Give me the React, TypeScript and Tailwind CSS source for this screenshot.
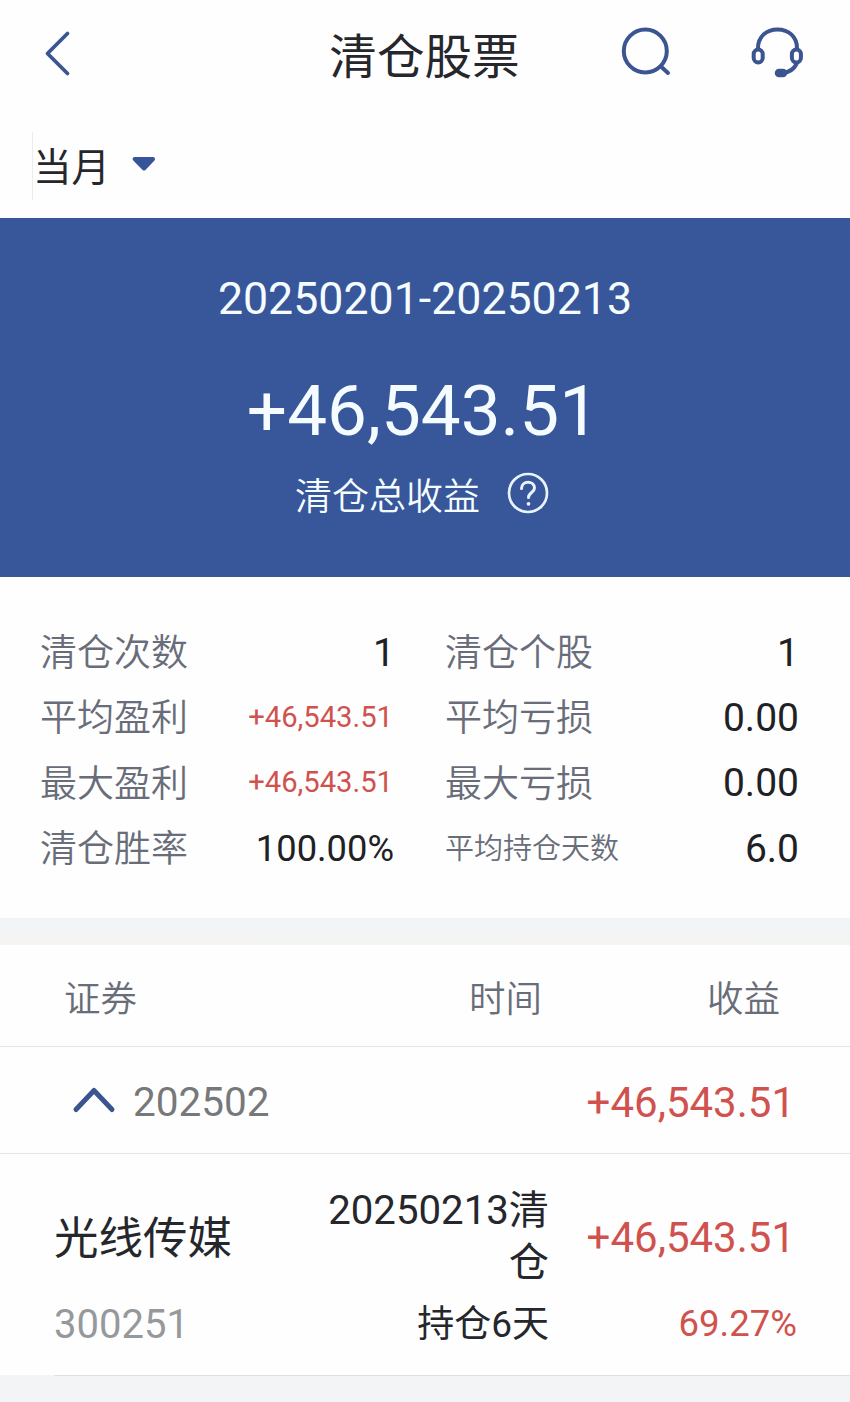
const stats = [
  { label: "清仓次数", value: "1", label2: "清仓个股", value2: "1" },
  { label: "平均盈利", value: "+46,543.51", label2: "平均亏损", value2: "0.00" },
  { label: "最大盈利", value: "+46,543.51", label2: "最大亏损", value2: "0.00" },
  { label: "清仓胜率", value: "100.00%", label2: "平均持仓天数", value2: "6.0" },
]

function valueClass(value: string) {
  if (value.startsWith("+")) return "pr-0.5 pt-px text-[29.200px] text-[#d0524e]"
  if (value.endsWith("%")) return "pr-px pt-[3px] text-[36.300px] text-[#1f2125]"
  return "pt-[3px] text-[39px] text-[#1f2125]"
}

function Header() {
  return (
    <header className="flex h-[110px] items-center justify-between pl-[42px] pr-[46px]">
      <div className="flex w-[187px] pb-1">
        <svg width="30" height="48" viewBox="0 0 30 48" fill="none" stroke="#3b5590" strokeWidth="3.800" strokeLinecap="round" strokeLinejoin="round">
          <path d="M25.500 4.500 L5.500 24.500 L25.500 44.500" />
        </svg>
      </div>
      <h1 className="pt-1.5 text-[47.600px] leading-[56px] text-[#25272c]">清仓股票</h1>
      <div className="flex w-[184px] items-center justify-between pb-1">
        <svg width="52" height="52" viewBox="0 0 52 52" fill="none" stroke="#3b5590" strokeWidth="4" strokeLinecap="round">
          <circle cx="25.300" cy="24" r="21.500" />
          <path d="M41.500 40 L48 46" />
        </svg>
        <svg width="54" height="54" viewBox="0 0 54 54" fill="none" stroke="#3b5590" strokeWidth="4" strokeLinecap="round">
          <path d="M8 22 C8 11 16 3.500 27.500 3.500 C39 3.500 47 11 47 22" />
          <rect x="3.700" y="23.500" width="9" height="13" rx="4.500" />
          <rect x="41.900" y="23.500" width="9" height="13" rx="4.500" />
          <path d="M46.500 38 C44 43 40 46 33 47" />
          <rect x="26" y="44" width="10" height="6" rx="3" fill="#3b5590" strokeWidth="2.500" />
        </svg>
      </div>
    </header>
  )
}

function Filter() {
  return (
    <div className="flex h-[108px] pl-8 pt-[22px]">
      <div className="flex h-[68px] items-center border-l border-[#ececee]">
        <span className="pt-1 text-[38.500px] leading-[44px] text-[#25272c]">当月</span>
        <svg className="mb-1 ml-[22px]" width="24" height="18" viewBox="0 0 24 18">
          <path d="M2.700 4 H21 L12 13.500 Z" fill="#37539a" stroke="#37539a" strokeWidth="4" strokeLinejoin="round" />
        </svg>
      </div>
    </div>
  )
}

function Summary() {
  return (
    <section className="flex h-[359px] flex-col items-center bg-[#38569a] pt-[54px] text-[#f5fcff]">
      <p className="text-[44.700px] leading-[54px]">20250201-20250213</p>
      <p className="mt-[43px] pr-1 text-[71px] leading-[84px]">+46,543.51</p>
      <div className="mt-[17px] flex items-center gap-[27px] pr-1.5">
        <span className="pt-1.5 text-[37px] font-[350] leading-[44px]">清仓总收益</span>
        <svg className="mb-[5px]" width="42" height="42" viewBox="0 0 42 42" fill="none" stroke="#e9f3fd" strokeWidth="3" strokeLinecap="round">
          <circle cx="21" cy="21" r="19" strokeWidth="2.700" />
          <path d="M14.500 16.500 C14.500 8 27.500 8.500 27.500 16 C27.500 20.500 21.500 20.500 21.500 25.500" />
          <circle cx="21.500" cy="31.800" r="1.900" fill="#e9f3fd" stroke="none" />
        </svg>
      </div>
    </section>
  )
}

function Stats() {
  return (
    <section className="h-[341px] pl-[40px] pr-[51px] pt-[42px]">
      {stats.map((row) => (
        <div key={row.label} className="flex h-[65.300px] items-center">
          <div className="flex w-[355px] items-center justify-between">
            <span className="pt-1 text-[37px] font-[350] text-[#686d79]">{row.label}</span>
            <span className={valueClass(row.value)}>{row.value}</span>
          </div>
          <div className="ml-[50px] flex flex-1 items-center justify-between">
            <span className={row.label2.length > 4 ? "pt-1 text-[29px] font-[350] text-[#686d79]" : "pt-1 text-[37px] font-[350] text-[#686d79]"}>
              {row.label2}
            </span>
            <span className={valueClass(row.value2)}>{row.value2}</span>
          </div>
        </div>
      ))}
    </section>
  )
}

function TableHead() {
  return (
    <div className="flex h-[102px] items-center border-b border-[#e4e5e7] pl-16 pr-[70px] pt-2.5 text-[36.500px] font-[350] text-[#686d79]">
      <span className="flex-1">证券</span>
      <span className="w-[73px]">时间</span>
      <span className="ml-[165px]">收益</span>
    </div>
  )
}

function MonthRow() {
  return (
    <div className="flex h-[107px] items-center justify-between border-b border-[#e4e5e7] pl-[72px] pr-[55px]">
      <div className="flex items-center gap-[17px]">
        <svg width="44" height="28" viewBox="0 0 44 28" fill="none" stroke="#3b5590" strokeWidth="5" strokeLinecap="round" strokeLinejoin="round">
          <path d="M4 23.500 L22 4.500 L40 23.500" />
        </svg>
        <span className="pt-[5px] text-[40.500px] text-[#77787a]">202502</span>
      </div>
      <span className="pt-1.5 text-[42px] text-[#d0524e]">+46,543.51</span>
    </div>
  )
}

function StockRow() {
  return (
    <>
      <div className="flex h-[221px] pl-[54px] pr-[55px] pt-[30px]">
        <div className="flex w-[236px] flex-col">
          <span className="flex h-[105px] items-center pt-1.5 text-[44.500px] text-[#25272c]">光线传媒</span>
          <span className="flex h-[70px] items-center pt-px text-[40px] text-[#96999c]">300251</span>
        </div>
        <div className="flex w-[259px] flex-col text-right text-[#25272c]">
          <p className="h-[105px] pl-[30px] pt-px text-[40.200px] leading-[52px] break-all">20250213清仓</p>
          <p className="h-[70px] pt-px text-[37px] leading-[70px]">持仓6天</p>
        </div>
        <div className="flex flex-1 flex-col items-end text-[#d0524e]">
          <span className="flex h-[105px] items-center pt-0.5 text-[42px]">+46,543.51</span>
          <span className="-mr-0.5 flex h-[70px] items-center text-[36.500px]">69.27%</span>
        </div>
      </div>
      <div className="bg-[#f3f4f6] pl-[54px]">
        <div className="h-px bg-[#dfe0e2]" />
      </div>
    </>
  )
}

function App() {
  return (
    <div className="flex h-[1402px] w-[850px] flex-col overflow-hidden bg-[#fefefe] font-['Roboto','Noto_Sans_CJK_SC',sans-serif] leading-none" lang="zh-CN">
      <Header />
      <Filter />
      <Summary />
      <Stats />
      <div className="h-[27px] bg-linear-to-b from-[#f0f4f8] to-[#f5f4f3]" />
      <TableHead />
      <MonthRow />
      <StockRow />
      <div className="flex-1 bg-[#f2f4f6]" />
    </div>
  )
}

export default App
